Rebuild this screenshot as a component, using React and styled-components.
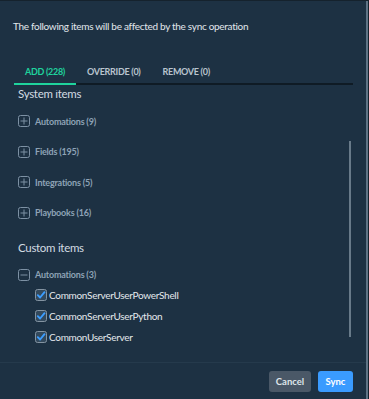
import React, { useEffect, useRef } from 'react';
import styled, { createGlobalStyle } from 'styled-components';

const Bg = '#1d3143';
const Green = '#1fd39d';

const GlobalStyle = createGlobalStyle`
  html, body {
    margin: 0;
    padding: 0;
    background: ${Bg};
    overflow: hidden;
  }
  * { box-sizing: border-box; }
`;

const Frame = styled.div`
  width: 369px;
  height: 399px;
  border-top: 1px solid #15222d;
  border-right: 1px solid #15222d;
  display: flex;
`;

const Panel = styled.div`
  flex: 1;
  display: flex;
  flex-direction: column;
  border-right: 2px solid #5f7486;
  font-family: Lato, "Liberation Sans", sans-serif;
`;

const Header = styled.div`
  padding: 18px 13px 0;
  height: 48px;
  font-size: 10px;
  letter-spacing: -0.3px;
  line-height: 14px;
  color: #e1e7ec;
`;

const TabBar = styled.div`
  display: flex;
  margin: 11px 13px 0 14px;
  border-bottom: 2px solid #0f1b25;
`;

const Tab = styled.div`
  padding: 0 11px;
  height: 25px;
  line-height: 24px;
  font-size: 9px;
  letter-spacing: -0.3px;
  font-weight: 700;
  color: ${p => (p.$active ? Green : '#b9c4ce')};
  box-shadow: ${p => (p.$active ? `inset 0 -2px 0 ${Green}` : 'none')};
  margin-bottom: -2px;
`;

const ScrollWrap = styled.div`
  position: relative;
  margin: 5px 13px 0 14px;
  height: 266px;
`;

const Viewport = styled.div`
  height: 100%;
  overflow: hidden;
  padding-left: 4px;
`;

const Thumb = styled.div`
  position: absolute;
  right: 2px;
  top: 51px;
  width: 2px;
  height: 196px;
  background: #687a89;
`;

const SectionTitle = styled.div`
  padding-top: ${p => p.$top}px;
  line-height: 20px;
  font-size: 11.5px;
  letter-spacing: -0.3px;
  color: #d3dbe2;
`;

const GroupList = styled.div`
  display: flex;
  flex-direction: column;
  gap: 10.5px;
  margin-top: 7px;
`;

const GroupRow = styled.div`
  display: flex;
  align-items: center;
  gap: 5px;
  height: 20px;
  font-size: 9px;
  letter-spacing: -0.2px;
  font-weight: 700;
  color: #8ea3b6;
`;

const Checks = styled.div`
  display: flex;
  flex-direction: column;
  padding: 0 0 20px 17px;
`;

const CheckRow = styled.div`
  display: flex;
  align-items: center;
  gap: 1px;
  height: 21px;
  font-size: 10px;
  letter-spacing: -0.3px;
  color: #e3e8ec;
`;

const Footer = styled.div`
  margin-top: auto;
  border-top: 1px solid #253a4c;
  display: flex;
  justify-content: flex-end;
  gap: 7px;
  padding: 8px 13px 7px 0;
`;

const Button = styled.button`
  width: ${p => p.$w}px;
  height: 21px;
  padding: 0;
  border: none;
  border-radius: 3px;
  font-family: Lato, "Liberation Sans", sans-serif;
  font-size: 9.5px;
  font-weight: 700;
  color: ${p => (p.$primary ? '#ffffff' : '#dfe5ea')};
  background: ${p => (p.$primary ? '#3a9bff' : '#4a5867')};
`;

const BoxIcon = ({ open }) => (
  <svg width="12" height="12" viewBox="0 0 12 12">
    <rect x="0.5" y="0.5" width="11" height="11" rx="2" fill="none" stroke="#7d91a4" />
    <line x1="2.5" y1="6" x2="9.5" y2="6" stroke="#7d91a4" />
    {!open && <line x1="6" y1="2.5" x2="6" y2="9.5" stroke="#7d91a4" />}
  </svg>
);

const CheckIcon = () => (
  <svg width="13" height="13" viewBox="0 0 13 13">
    <rect x="0.5" y="0.5" width="11" height="11" rx="2" fill="#33495c" stroke="#8494a2" />
    <path d="M2.8 6.2 L5.1 8.5 L9.5 3.2" fill="none" stroke="#3c9dff" strokeWidth="1.9" strokeLinecap="round" strokeLinejoin="round" />
  </svg>
);

const Group = ({ label, open }) => (
  <GroupRow>
    <BoxIcon open={open} />
    <span>{label}</span>
  </GroupRow>
);

const systemGroups = ['Automations (9)', 'Fields (195)', 'Integrations (5)', 'Playbooks (16)'];
const customScripts = ['CommonServerUserPowerShell', 'CommonServerUserPython', 'CommonUserServer'];

export default function App() {
  const viewRef = useRef(null);

  useEffect(() => {
    if (viewRef.current) viewRef.current.scrollTop = 16;
  }, []);

  return (
    <>
      <GlobalStyle />
      <Frame>
        <Panel>
          <Header>The following items will be affected by the sync operation</Header>
          <TabBar>
            <Tab $active>ADD (228)</Tab>
            <Tab>OVERRIDE (0)</Tab>
            <Tab>REMOVE (0)</Tab>
          </TabBar>
          <ScrollWrap>
            <Viewport ref={viewRef}>
              <SectionTitle $top={10}>System items</SectionTitle>
              <GroupList>
                {systemGroups.map(g => <Group key={g} label={g} />)}
              </GroupList>
              <SectionTitle $top={15}>Custom items</SectionTitle>
              <GroupList>
                <Group label="Automations (3)" open />
              </GroupList>
              <Checks>
                {customScripts.map(s => (
                  <CheckRow key={s}>
                    <CheckIcon />
                    <span>{s}</span>
                  </CheckRow>
                ))}
              </Checks>
            </Viewport>
            <Thumb />
          </ScrollWrap>
          <Footer>
            <Button $w={42}>Cancel</Button>
            <Button $primary $w={35}>Sync</Button>
          </Footer>
        </Panel>
      </Frame>
    </>
  );
}
